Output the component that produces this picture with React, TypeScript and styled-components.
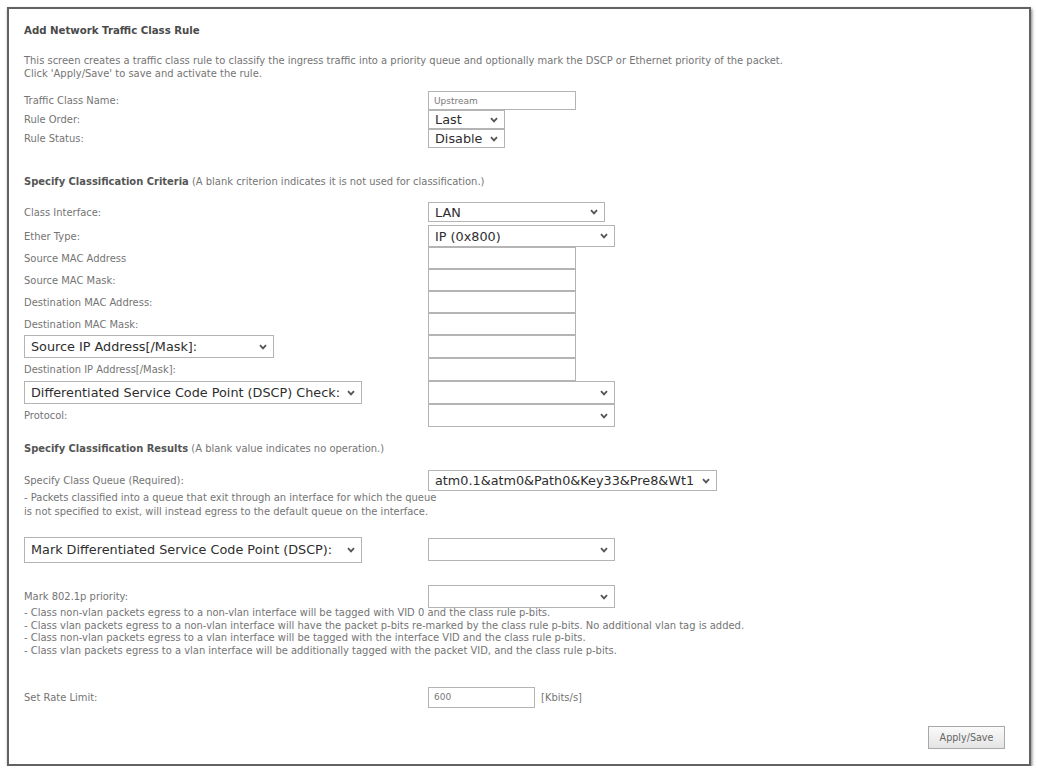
import React from 'react';
import styled, { createGlobalStyle } from 'styled-components';

const GlobalStyle = createGlobalStyle`
  html, body {
    margin: 0;
    padding: 0;
    background: #fff;
  }
  body {
    font-family: "DejaVu Sans", Verdana, sans-serif;
  }
`;

const Frame = styled.div`
  box-sizing: border-box;
  width: 1024px;
  height: 759px;
  margin: 7px 0 0 7px;
  border: 2px solid #626262;
  box-shadow: 1px 2px 3px rgba(0, 0, 0, 0.5);
  padding: 15px 24px 0 15px;
  color: #747474;
  font-size: 9.95px;
  display: flex;
  flex-direction: column;
`;

const Title = styled.div`
  font-weight: 700;
  font-size: 10.2px;
  line-height: 14px;
  color: #4a4a4a;
`;

const Intro = styled.p`
  margin: 16px 0 0;
  line-height: 13px;
  white-space: nowrap;
`;

const SectionHead = styled.div<{ $top: number }>`
  margin-top: ${(p) => p.$top}px;
  line-height: 14px;

  b {
    color: #555;
  }
`;

const Row = styled.div<{ $top?: number; $h: number }>`
  display: flex;
  align-items: center;
  margin-top: ${(p) => p.$top ?? 0}px;
  height: ${(p) => p.$h}px;
`;

const Label = styled.div`
  width: 404px;
  flex-shrink: 0;
`;

const LabelSlot = styled.div`
  width: 404px;
  flex-shrink: 0;
  display: flex;
  align-items: center;
`;

const TextBox = styled.div<{ $w: number }>`
  box-sizing: border-box;
  width: ${(p) => p.$w}px;
  height: 100%;
  border: 1px solid #b4b4b4;
  padding: 0 5px;
  display: flex;
  align-items: center;
  color: #7a7a7a;
  font-size: 9px;
`;

const SelectBox = styled.div<{ $w: number; $h?: number }>`
  box-sizing: border-box;
  width: ${(p) => p.$w}px;
  height: ${(p) => (p.$h ? `${p.$h}px` : '100%')};
  border: 1px solid #b4b4b4;
  padding: 0 6px 0 6px;
  display: flex;
  align-items: center;
  justify-content: space-between;
  gap: 4px;
  font-family: "DejaVu Sans", "Liberation Sans", sans-serif;
  font-size: 12.8px;
  color: #2e2e2e;
  white-space: nowrap;

  svg {
    flex-shrink: 0;
  }
`;

const Note = styled.div<{ $top: number; $lh: number }>`
  margin-top: ${(p) => p.$top}px;
  line-height: ${(p) => p.$lh}px;
  white-space: nowrap;
`;

const Unit = styled.span`
  margin-left: 6px;
`;

const Footer = styled.div`
  display: flex;
  justify-content: flex-end;
  margin-top: 18px;
`;

const Button = styled.button`
  width: 77px;
  height: 23px;
  border: 1px solid #a8a8a8;
  background: linear-gradient(#fafafa, #e4e4e4);
  font-family: "DejaVu Sans", Verdana, sans-serif;
  font-size: 9.6px;
  color: #666;
  padding: 0;
`;

const Chevron = () => (
  <svg width="8" height="6" viewBox="0 0 8 6" aria-hidden="true">
    <polyline points="1,1.2 4,4.4 7,1.2" fill="none" stroke="#555" strokeWidth="1.8" />
  </svg>
);

const Select: React.FC<{ w: number; h?: number; value?: string }> = ({ w, h, value }) => (
  <SelectBox $w={w} $h={h}>
    <span>{value ?? ''}</span>
    <Chevron />
  </SelectBox>
);

const vlanNotes = [
  '- Class non-vlan packets egress to a non-vlan interface will be tagged with VID 0 and the class rule p-bits.',
  '- Class vlan packets egress to a non-vlan interface will have the packet p-bits re-marked by the class rule p-bits. No additional vlan tag is added.',
  '- Class non-vlan packets egress to a vlan interface will be tagged with the interface VID and the class rule p-bits.',
  '- Class vlan packets egress to a vlan interface will be additionally tagged with the packet VID, and the class rule p-bits.',
];

const macRows = ['Source MAC Address', 'Source MAC Mask:', 'Destination MAC Address:', 'Destination MAC Mask:'];

export default function App() {
  return (
    <>
      <GlobalStyle />
      <Frame>
        <Title>Add Network Traffic Class Rule</Title>
        <Intro>
          This screen creates a traffic class rule to classify the ingress traffic into a priority queue and
          optionally mark the DSCP or Ethernet priority of the packet.
          <br />
          Click 'Apply/Save' to save and activate the rule.
        </Intro>

        <Row $top={11} $h={19}>
          <Label>Traffic Class Name:</Label>
          <TextBox $w={148}>Upstream</TextBox>
        </Row>
        <Row $h={19}>
          <Label>Rule Order:</Label>
          <Select w={77} value="Last" />
        </Row>
        <Row $h={19}>
          <Label>Rule Status:</Label>
          <Select w={77} value="Disable" />
        </Row>

        <SectionHead $top={27}>
          <b>Specify Classification Criteria</b> (A blank criterion indicates it is not used for classification.)
        </SectionHead>

        <Row $top={13} $h={20}>
          <Label>Class Interface:</Label>
          <Select w={177} value="LAN" />
        </Row>
        <Row $top={3} $h={22}>
          <Label>Ether Type:</Label>
          <Select w={187} value="IP (0x800)" />
        </Row>
        {macRows.map((label) => (
          <Row key={label} $h={22}>
            <Label>{label}</Label>
            <TextBox $w={148} />
          </Row>
        ))}
        <Row $h={23}>
          <LabelSlot>
            <Select w={250} h={23} value="Source IP Address[/Mask]:" />
          </LabelSlot>
          <TextBox $w={148} />
        </Row>
        <Row $h={23}>
          <Label>Destination IP Address[/Mask]:</Label>
          <TextBox $w={148} />
        </Row>
        <Row $h={23}>
          <LabelSlot>
            <Select w={338} h={23} value="Differentiated Service Code Point (DSCP) Check:" />
          </LabelSlot>
          <Select w={187} />
        </Row>
        <Row $h={23}>
          <Label>Protocol:</Label>
          <Select w={187} />
        </Row>

        <SectionHead $top={15}>
          <b>Specify Classification Results</b> (A blank value indicates no operation.)
        </SectionHead>

        <Row $top={14} $h={21}>
          <Label>Specify Class Queue (Required):</Label>
          <Select w={289} value="atm0.1&atm0&Path0&Key33&Pre8&Wt1" />
        </Row>
        <Note $top={0} $lh={14}>
          - Packets classified into a queue that exit through an interface for which the queue
          <br />
          is not specified to exist, will instead egress to the default queue on the interface.
        </Note>

        <Row $top={17} $h={27}>
          <LabelSlot>
            <Select w={338} h={26} value="Mark Differentiated Service Code Point (DSCP):" />
          </LabelSlot>
          <Select w={187} h={23} />
        </Row>

        <Row $top={22} $h={23}>
          <Label>Mark 802.1p priority:</Label>
          <Select w={187} />
        </Row>
        <Note $top={-1} $lh={12.7}>
          {vlanNotes.map((n) => (
            <div key={n}>{n}</div>
          ))}
        </Note>

        <Row $top={29} $h={21}>
          <Label>Set Rate Limit:</Label>
          <TextBox $w={107}>600</TextBox>
          <Unit>[Kbits/s]</Unit>
        </Row>

        <Footer>
          <Button>Apply/Save</Button>
        </Footer>
      </Frame>
    </>
  );
}
